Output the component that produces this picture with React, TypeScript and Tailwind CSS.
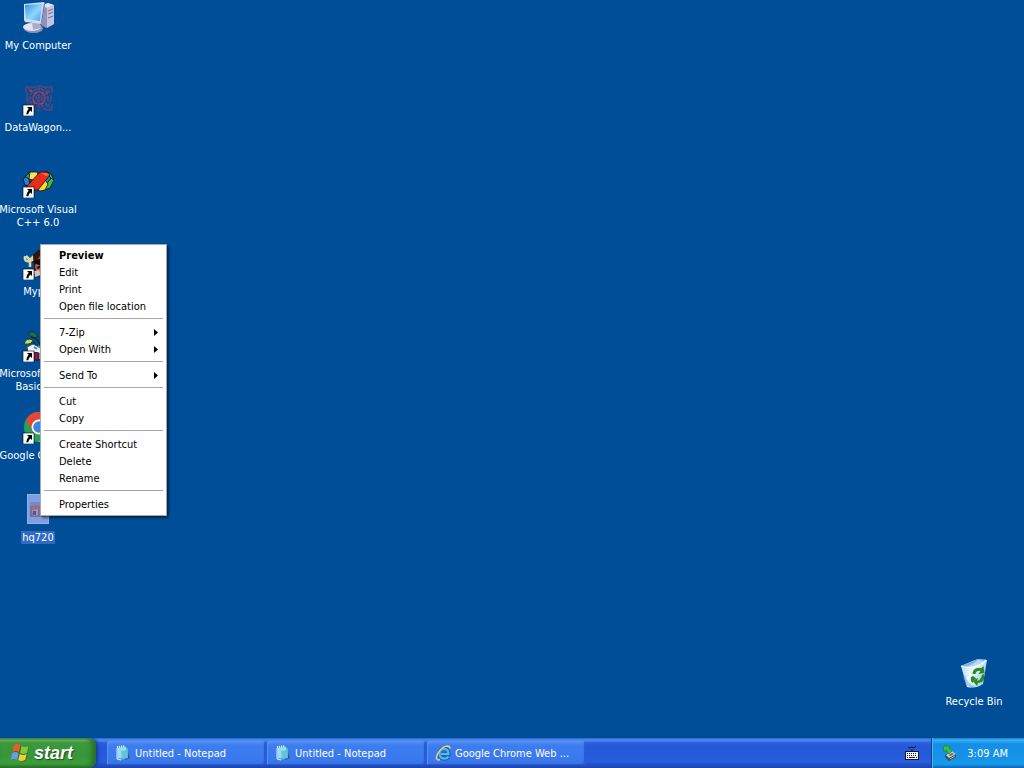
import { Fragment, type ReactNode } from "react";

const FONT =
  "font-['Tahoma','DejaVu_Sans_Condensed','DejaVu_Sans',sans-serif] text-[11px] leading-[13px]";

function ShortcutArrow() {
  return (
    <g>
      <rect x="1" y="21" width="11" height="11" fill="#fff" stroke="#000" strokeWidth="0.6" />
      <path d="M5 23h5v5l-1.600-1.600Q6.500 28 6.300 30.300H4.200Q4 27.500 6.700 24.800z" fill="#000" />
    </g>
  );
}

function IconFrame({ children, shortcut }: { children: ReactNode; shortcut?: boolean }) {
  return (
    <svg viewBox="0 0 32 32" className="block size-8 shrink-0" aria-hidden="true">
      {children}
      {shortcut && <ShortcutArrow />}
    </svg>
  );
}

function MyComputerIcon() {
  return (
    <IconFrame>
      <defs>
        <linearGradient id="screen" x1="0" y1="0" x2="1" y2="1">
          <stop offset="0" stopColor="#2e93e6" />
          <stop offset="0.55" stopColor="#8fd6ff" />
          <stop offset="1" stopColor="#3fa3ef" />
        </linearGradient>
      </defs>
      <path d="M20 3l6-2 6 2v19l-8 4-5-3z" fill="#9092b8" />
      <path d="M20 3l6-2 6 2-7 3z" fill="#e4e4f2" />
      <path d="M25 6l7-3v19l-7 4z" fill="#c3c4dd" />
      <path d="M26 9l5-2M26 12l5-2M26 16l5-2" stroke="#70729c" fill="none" />
      <ellipse cx="11.500" cy="26.500" rx="9.500" ry="4.500" fill="#8e90ba" />
      <ellipse cx="10" cy="25" rx="9" ry="4" fill="#e3e3f1" />
      <path d="M10 20l8 1 1 5-8 2z" fill="#a9abc9" />
      <path d="M2 2l20-2 1 2-3 20-17-2-1-2z" fill="#d4d9ec" />
      <path d="M3 3l17-1-2 17-14-2z" fill="url(#screen)" />
      <path d="M22 1l1 1-3 20-1-1z" fill="#696d9c" />
    </IconFrame>
  );
}

function DataWagonIcon() {
  return (
    <IconFrame shortcut>
      <g fill="none" stroke="#56447e" strokeWidth="1.600">
        <circle cx="17" cy="14" r="12" strokeDasharray="4 1.500" />
        <circle cx="17" cy="14" r="9" strokeDasharray="3 1.500" stroke="#66437a" />
        <circle cx="17" cy="14" r="6" stroke="#87425f" />
        <circle cx="17" cy="14" r="3" strokeDasharray="3 1" stroke="#6d4078" />
        <path d="M5 3l24 22M29 3L5 25M17 1v26M4 14h26" strokeDasharray="3 2" />
        <path d="M4 9V3h7M23 3h7v6M30 20v6h-7M4 16h4M13 2l2 4M21 2l-2 4" />
      </g>
      <path
        d="M12 10l3-2M20 8l3 3M11 16l2 4M22 18l-3 3M8 6l2 2M26 8l-2 2"
        stroke="#a33f52"
        strokeWidth="1.600"
      />
    </IconFrame>
  );
}

function VisualCppIcon() {
  return (
    <IconFrame shortcut>
      <g stroke="#10141c" strokeWidth="0.8">
        <path d="M1 13l7-7 3 1-4 6 1 7-5-1z" fill="#27a836" />
        <path d="M1 13l2 6 5 1-1-7-3-2z" fill="#2b7fe0" />
        <path d="M8 6h7l2 5-6 3-4-1z" fill="#ffe15a" />
        <path d="M24 5l5 3 3 6-3-1-4-5z" fill="#43bd32" />
        <path d="M29 12l3 2-4 8-6 2 1-5z" fill="#43bd32" />
        <path d="M25 8l4 4-5 7-2-4z" fill="#1683d9" />
        <path d="M18 19l5-5 3 4-3 6-5 1-4-2z" fill="#ffdc28" />
        <path d="M18 6h7l3 3-12 15H8l-3-4z" fill="#e92e16" />
      </g>
      <path d="M19 7h6l2 2-3 1z" fill="#ff6540" />
    </IconFrame>
  );
}

function MonkeyIcon() {
  return (
    <IconFrame shortcut>
      <path
        d="M3 8q-1 6 4 5l5-1M4 8l4 4 4-4M8 13v6"
        fill="none"
        stroke="#ddd6a7"
        strokeWidth="2.500"
      />
      <path d="M11 7l5-5 8 1 6 5v18l-11 5-7-8z" fill="#35150e" />
      <path d="M14 13l5-6 7 5-1 10-8 4-4-6z" fill="#ad6843" />
      <path d="M12 14l5-2v4zM15 20l5-2" stroke="#190a0b" strokeWidth="2" />
      <path d="M12 23l5-1 2 5-6 2z" fill="#dcbfba" />
    </IconFrame>
  );
}

function VisualBasicIcon() {
  return (
    <IconFrame shortcut>
      <path d="M6 3q7-4 10 4-7 2-10-4z" fill="#176f50" stroke="#10372c" />
      <path d="M2 14q2-7 9-4-1 5-9 4z" fill="#c9da52" stroke="#263b21" />
      <path d="M9 7q7 1 9 8M11 12l5 5" fill="none" stroke="#162c2a" strokeWidth="1.500" />
      <path d="M5 17l6-3 8 4v10H7z" fill="#edf3fa" stroke="#384b65" />
      <path d="M12 17l3 2M16 16l3 2" stroke="#2f91bd" strokeWidth="2" />
      <path d="M11 22l6 1v7h-6z" fill="#8e1741" stroke="#35172b" />
      <path d="M19 15l5-1 4 7-5 9-6-1z" fill="#64bbdf" />
    </IconFrame>
  );
}

function ChromeIcon() {
  return (
    <IconFrame shortcut>
      <circle cx="17" cy="15" r="15" fill="#23a456" />
      <path d="M4 7.500A15 15 0 0 1 30 7.500H17l-7 11z" fill="#e94536" />
      <path d="M30 7.500A15 15 0 0 1 17 30l7-11-7-11.500z" fill="#f8cc35" />
      <circle cx="17" cy="15" r="7.500" fill="#fff" />
      <circle cx="17" cy="15" r="5.800" fill="#4285df" />
    </IconFrame>
  );
}

function ImageFileIcon() {
  return (
    <IconFrame>
      <path d="M5 0h18l4 4v26H5z" fill="#7e9fe2" />
      <path d="M5.500 0.500H23l3.500 4v25h-21z" fill="none" stroke="#93afe9" />
      <path d="M8 8h15v15H8z" fill="#786f9f" />
      <path d="M8 8h15v4H8z" fill="#7889c5" />
      <path d="M8 13l6-2 9 2-3 3-12-1z" fill="#947084" />
      <path d="M10 16l6-1v6l-5 1z" fill="#a293ae" />
      <path d="M11 17h3v4h-3z" fill="#62528a" />
    </IconFrame>
  );
}

function RecycleBinIcon() {
  return (
    <IconFrame>
      <defs>
        <linearGradient id="bin" x1="0" y1="0" x2="1" y2="0.400">
          <stop offset="0" stopColor="#a9d6f4" />
          <stop offset="0.5" stopColor="#edf8fe" />
          <stop offset="1" stopColor="#a4cee9" />
        </linearGradient>
      </defs>
      <path d="M3 8q9-4 17-7l9 1-4 24q-7 5-16 3z" fill="url(#bin)" />
      <path d="M3 8q9-4 17-7l8 1q-7 6-14 7-6 1-11-1z" fill="#81b3e3" />
      <path d="M7 9q6-1 13-7l6 1q-7 5-13 6z" fill="#b8daf4" />
      <path d="M3 8q5 2 12 1 9-2 13-7" fill="none" stroke="#f5fcff" strokeWidth="1.300" />
      <path d="M5 18l3 9q4 3 10 2-9-3-11-12z" fill="#72afe0" opacity="0.600" />
      <g fill="#278c1c">
        <path d="M14.500 16q0-5 5-6l4 0 2-2 1 7-6 1 2-3q-4-1-5 3z" />
        <path d="M24 17l2-1q1 5-2 8l-4 1-1 3-4-5 5-3-1 3q4-1 5-6z" />
        <path d="M15 18l4 3-3 1-1 3q-3-2-2-6z" />
      </g>
    </IconFrame>
  );
}

type Shortcut = { label: string; icon: ReactNode; selected?: boolean };

const shortcuts: Shortcut[] = [
  { label: "My Computer", icon: <MyComputerIcon /> },
  { label: "DataWagon...", icon: <DataWagonIcon /> },
  { label: "Microsoft Visual\nC++ 6.0", icon: <VisualCppIcon /> },
  { label: "Mypal", icon: <MonkeyIcon /> },
  { label: "Microsoft Visual\nBasic 6.0", icon: <VisualBasicIcon /> },
  { label: "Google Chrome", icon: <ChromeIcon /> },
  { label: "hq720", icon: <ImageFileIcon />, selected: true },
];

function DesktopIcon({ label, icon, selected }: Shortcut) {
  return (
    <button
      type="button"
      className="flex h-[82px] w-19 flex-col items-center gap-[5px] pt-0.5 text-center whitespace-pre text-white"
    >
      {icon}
      <span className={selected ? "bg-[#316ac5] px-px" : ""}>{label}</span>
    </button>
  );
}

type MenuItem = { label: string; submenu?: boolean; primary?: boolean };

const menuGroups: MenuItem[][] = [
  [
    { label: "Preview", primary: true },
    { label: "Edit" },
    { label: "Print" },
    { label: "Open file location" },
  ],
  [
    { label: "7-Zip", submenu: true },
    { label: "Open With", submenu: true },
  ],
  [{ label: "Send To", submenu: true }],
  [{ label: "Cut" }, { label: "Copy" }],
  [{ label: "Create Shortcut" }, { label: "Delete" }, { label: "Rename" }],
  [{ label: "Properties" }],
];

function ContextMenu() {
  return (
    <div
      role="menu"
      aria-label="File"
      className="absolute top-[244px] left-10 w-[127px] border border-[#a5a8ab] bg-white p-0.5 text-black shadow-[2px_2px_2px_rgba(0,0,0,0.5)]"
    >
      {menuGroups.map((group, index) => (
        <Fragment key={index}>
          {index > 0 && <hr className="mx-px mt-[3px] mb-[5px] border-t border-[#a6a6a4]" />}
          {group.map((item) => (
            <button
              key={item.label}
              type="button"
              role="menuitem"
              className={`flex h-[17px] w-full items-center justify-between pr-1.5 pl-4 whitespace-nowrap ${
                item.primary ? "font-bold" : ""
              }`}
            >
              {item.label}
              {item.submenu && (
                <svg viewBox="0 0 4 7" className="h-[7px] w-1" aria-hidden="true">
                  <path d="M0 0l4 3.500L0 7z" />
                </svg>
              )}
            </button>
          ))}
        </Fragment>
      ))}
    </div>
  );
}

function WindowsFlag() {
  return (
    <svg viewBox="0 0 20 18" className="h-[18px] w-5" aria-hidden="true">
      <path
        d="M4 2q4-2 7 0 4 2 8 0l-3 15q-4 2-8-1-3-2-7 0z"
        fill="#174e16"
        opacity="0.500"
      />
      <path d="M4 1q3-2 6.500 0L9 8Q6 6 2.500 8z" fill="#f15a29" />
      <path d="M11.500 2q3.500 2 7 0L17 9q-4 2-7 0z" fill="#84c83d" />
      <path d="M2.200 9q3.500-2 6.500 0l-1.500 7Q4 14 0.700 16z" fill="#669de9" />
      <path d="M9.700 10q3.500 2 7 0l-1.500 6q-4 2-7 0z" fill="#f9cc34" />
    </svg>
  );
}

function NotepadIcon() {
  return (
    <svg viewBox="0 0 16 16" className="size-4 shrink-0" aria-hidden="true">
      <path d="M12 4l3 9-5 2-1-3z" fill="#2a5c8c" />
      <path d="M2 2l8-1 3 3v9l-8 2-3-1z" fill="#5eb8dc" />
      <path d="M3 3l8-1v10l-8 1z" fill="#9ddcf0" />
      <path d="M6 6l5-1 1 7-5 1z" fill="#66c2e2" />
      <path d="M2 2l8-1" stroke="#d9f3fb" strokeDasharray="1 1" strokeWidth="2" />
      <path d="M2 3v11l4 1" fill="none" stroke="#d3eff7" />
    </svg>
  );
}

function ExplorerIcon() {
  return (
    <svg viewBox="0 0 16 16" className="size-4 shrink-0" aria-hidden="true">
      <path
        d="M13.500 11.500q-2 2.500-5 2-4-.5-4-5 .5-4.500 4.500-4.500 4.500 0 4.500 5H6"
        fill="none"
        stroke="#164f98"
        strokeWidth="4"
      />
      <path
        d="M13.500 11.500q-2 2.500-5 2-4-.5-4-5 .5-4.500 4.500-4.500 4.500 0 4.500 5H6"
        fill="none"
        stroke="#4fb9ee"
        strokeWidth="2.300"
      />
      <path
        d="M15 3.500Q15 1 12 1 6 2 2.500 9q-2.500 6 1 6l1.500-.5"
        fill="none"
        stroke="#f1ce75"
        strokeWidth="1.500"
      />
    </svg>
  );
}

function KeyboardIcon() {
  return (
    <svg viewBox="0 0 14 14" className="size-3.5" aria-hidden="true">
      <path d="M3 1l2 1 2-1 2 1 2-2M7 3v2" fill="none" stroke="#101a38" />
      <path d="M0 5h14v9H0z" fill="#111733" />
      <path d="M1 6h12v7H1z" fill="#f5f5f5" />
      <path d="M2 7.500h10M2 9.500h10" stroke="#111733" strokeDasharray="1 1" />
      <path d="M2 11.500h1m1 0h6m1 0h1" stroke="#111733" />
    </svg>
  );
}

function SafelyRemoveIcon() {
  return (
    <svg viewBox="0 0 16 16" className="size-4" aria-hidden="true">
      <path d="M3 10l7-4 4 3v3l-7 4-4-4z" fill="#3f5348" />
      <path d="M4 10l6-4 4 3-7 4z" fill="#c3cbc5" />
      <path d="M7 10l3-2 2 1-4 2z" fill="#59686b" />
      <path d="M1 1h7L7 3l3 3-3 3-3-4-2 2z" fill="#37c33e" stroke="#147836" strokeWidth="0.600" />
      <path d="M8 14l5-3" stroke="#a5b5a1" />
    </svg>
  );
}

const tasks = [
  { title: "Untitled - Notepad", icon: <NotepadIcon /> },
  { title: "Untitled - Notepad", icon: <NotepadIcon /> },
  { title: "Google Chrome Web ...", icon: <ExplorerIcon /> },
];

function Taskbar() {
  return (
    <footer className="flex h-[30px] shrink-0 bg-[linear-gradient(#2460d5_0,#508fee_2px,#285fdd_5px,#2459d8_8px,#265cdd_24px,#1c43aa_30px)] text-white">
      <button
        type="button"
        className="flex w-24 items-center gap-1 rounded-r-lg bg-[linear-gradient(#438644_0,#6aba67_2px,#3d983c_5px,#36953a_17px,#3c9e3a_26px,#286d29_30px)] pl-2.5 font-['Liberation_Sans',sans-serif] text-lg font-bold text-white italic shadow-[inset_-4px_0_5px_#25702a,2px_0_3px_#173f98] [text-shadow:1px_1px_1px_#1d4b20]"
      >
        <WindowsFlag />
        start
      </button>
      <nav
        aria-label="Open windows"
        className="flex min-w-0 flex-1 gap-0.5 pt-[3px] pb-[3px] pl-[11px]"
      >
        {tasks.map((task, index) => (
          <button
            key={index}
            type="button"
            className="flex w-[158px] items-center gap-1 rounded-xs bg-[linear-gradient(#5795f5_0,#3d7df0_4px,#3a78ed_20px,#3571e5)] pl-2 whitespace-nowrap shadow-[inset_1px_1px_0_#5a91f2,inset_-1px_-1px_1px_#255bc9]"
          >
            {task.icon}
            {task.title}
          </button>
        ))}
      </nav>
      <button
        type="button"
        aria-label="Keyboard layout"
        className="flex w-[39px] items-center justify-center"
      >
        <KeyboardIcon />
      </button>
      <div className="flex w-[93px] items-center justify-between border-l border-[#123f91] bg-[linear-gradient(#1479d4_0,#36b2f3_2px,#158fe5_6px,#1694e9_22px,#169ded_26px,#1160b3_30px)] pr-4 pl-2.5 whitespace-nowrap shadow-[inset_1px_0_0_#33c0f7]">
        <SafelyRemoveIcon />
        <time dateTime="03:09">3:09 AM</time>
      </div>
    </footer>
  );
}

export default function App() {
  return (
    <div className={`relative flex min-h-screen flex-col overflow-x-hidden bg-[#004e98] ${FONT}`}>
      <main className="flex flex-1 items-end justify-between">
        <div className="flex flex-col self-start">
          {shortcuts.map((shortcut) => (
            <DesktopIcon key={shortcut.label} {...shortcut} />
          ))}
        </div>
        <div className="pr-3">
          <DesktopIcon label="Recycle Bin" icon={<RecycleBinIcon />} />
        </div>
      </main>
      <ContextMenu />
      <Taskbar />
    </div>
  );
}
